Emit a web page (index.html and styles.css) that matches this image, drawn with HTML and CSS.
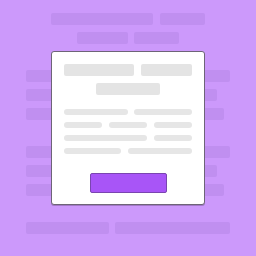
FILE: index.html
```html
<!DOCTYPE html>
<html>
<head>
<meta charset="utf-8">
<link rel="stylesheet" href="styles.css">
</head>
<body>
<div class="page">
  <div class="group top">
    <div class="row center"><span class="bar" style="width:102px"></span><span class="bar" style="width:45px"></span></div>
    <div class="row center"><span class="bar" style="width:51px"></span><span class="bar" style="width:45px"></span></div>
  </div>
  <div class="group">
    <div class="row"><span class="bar" style="width:204px"></span></div>
    <div class="row"><span class="bar" style="width:191px"></span></div>
    <div class="row"><span class="bar" style="width:198px"></span></div>
  </div>
  <div class="group">
    <div class="row"><span class="bar" style="width:204px"></span></div>
    <div class="row"><span class="bar" style="width:191px"></span></div>
    <div class="row"><span class="bar" style="width:198px"></span></div>
  </div>
  <div class="group">
    <div class="row"><span class="bar" style="width:83px"></span><span class="bar" style="width:115px"></span></div>
  </div>
</div>

<div class="modal">
  <div class="head">
    <div class="hrow"><span class="hbar" style="width:70px"></span><span class="hbar" style="width:51px"></span></div>
    <div class="hrow"><span class="hbar" style="width:64px"></span></div>
  </div>
  <div class="lines">
    <div class="line"><span class="seg" style="width:64px"></span><span class="seg" style="width:58px"></span></div>
    <div class="line"><span class="seg" style="width:38px"></span><span class="seg" style="width:38px"></span><span class="seg" style="width:38px"></span></div>
    <div class="line"><span class="seg" style="width:83px"></span><span class="seg" style="width:38px"></span></div>
    <div class="line"><span class="seg" style="width:57px"></span><span class="seg" style="width:64px"></span></div>
  </div>
  <div class="actions"><button class="btn"></button></div>
</div>
</body>
</html>
```

FILE: styles.css
```css
html, body {
  margin: 0;
  padding: 0;
  width: 256px;
  height: 256px;
  overflow: hidden;
  background: #cc99fb;
  font-family: "Liberation Sans", Arial, sans-serif;
}

.page {
  display: flex;
  flex-direction: column;
  padding: 13px 26px 0 26px;
  gap: 26px;
}

.group {
  display: flex;
  flex-direction: column;
  gap: 7px;
}

.row {
  display: flex;
  gap: 6px;
  height: 12px;
}

.row.center {
  justify-content: center;
  gap: 7px;
}

.top .row:nth-child(2) {
  gap: 6px;
}

.bar {
  display: block;
  height: 12px;
  background: #c08ff0;
  border-radius: 2px;
}

.modal {
  position: absolute;
  left: 51px;
  top: 51px;
  width: 154px;
  height: 154px;
  box-sizing: border-box;
  background: #ffffff;
  border: 1px solid #6e6478;
  border-radius: 3px;
  box-shadow: 0 1px 0 rgba(80, 60, 100, 0.35);
  padding: 12px;
  display: flex;
  flex-direction: column;
}

.head {
  display: flex;
  flex-direction: column;
  gap: 7px;
}

.hrow {
  display: flex;
  justify-content: center;
  gap: 7px;
  height: 12px;
}

.hbar {
  display: block;
  height: 12px;
  background: #e4e4e4;
  border-radius: 2px;
}

.lines {
  margin-top: 14px;
  display: flex;
  flex-direction: column;
  gap: 7px;
}

.line {
  display: flex;
  justify-content: space-between;
  height: 6px;
}

.seg {
  display: block;
  height: 6px;
  background: #e6e6e6;
  border-radius: 3px;
}

.actions {
  margin-top: 19px;
  display: flex;
  justify-content: center;
}

.btn {
  width: 77px;
  height: 20px;
  box-sizing: border-box;
  background: #a855f7;
  border: 1px solid #7a45b0;
  border-radius: 2px;
  padding: 0;
}
```
